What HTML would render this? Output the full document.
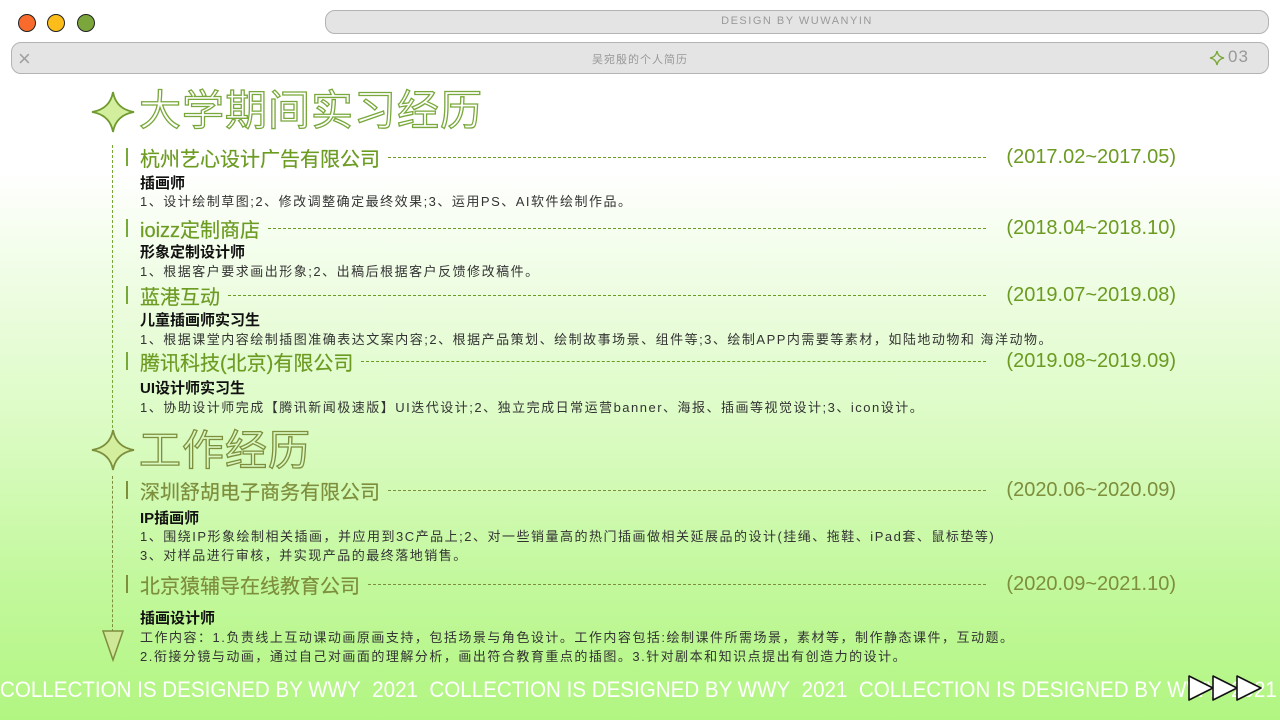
<!DOCTYPE html>
<html><head><meta charset="utf-8"><style>
*{margin:0;padding:0;box-sizing:border-box}
body{width:1280px;height:720px;overflow:hidden;position:relative;font-family:"Liberation Sans","Noto Sans CJK SC",sans-serif;
background:linear-gradient(to bottom,#fff 0px,#fff 170px,#effde4 280px,#d9fbc0 440px,#c3f89d 580px,#b2f682 720px)}
.a{position:absolute;white-space:nowrap}
.dot{position:absolute;top:14px;width:18px;height:18px;border-radius:50%;border:1.5px solid #222}
.bar{position:absolute;background:#e4e4e4;border:1.5px solid #b3b3b3;border-radius:10px}
.ttl{font-size:42px;color:#fff;-webkit-text-stroke:1.3px #79a83a;letter-spacing:1px;line-height:1}
.row{position:absolute;left:126px;display:flex;align-items:center;height:24px}
.row .v{width:2px;height:18px;background:#79a83a;margin-right:12px}
.row .c{font-size:20px;color:#6c9b22;white-space:nowrap;-webkit-text-stroke:0.2px #6c9b22}
.row .d{flex:1;border-top:1.3px dashed #6c9b22;margin:0 20px 0 8px}
.row .t{font-size:20px;color:#6c9b22;white-space:nowrap}
.role{position:absolute;left:140px;font-size:15px;font-weight:bold;color:#111;white-space:nowrap}
.desc{position:absolute;left:140px;font-size:13px;color:#333;letter-spacing:1.5px;white-space:nowrap}
.o .c,.o .t{color:#7d8e3c}.o .c{-webkit-text-stroke-color:#7d8e3c}.o .d{border-color:#7d8e3c}.o .v{background:#7d8e3c}
</style></head><body>
<div class="dot" style="left:18px;background:#f86b2c"></div>
<div class="dot" style="left:47px;background:#fcbc1a"></div>
<div class="dot" style="left:77px;background:#7aa63c"></div>
<div class="bar" style="left:325px;top:10px;width:944px;height:24px"></div>
<div class="a" style="left:325px;top:15px;width:944px;text-align:center;font-size:11px;color:#9a9a9a;letter-spacing:1.5px">DESIGN BY WUWANYIN</div>
<div class="bar" style="left:11px;top:42px;width:1258px;height:32px"></div>
<div class="a" style="left:18px;top:46px;font-size:22px;color:#a0a0a0">×</div>
<div class="a" style="left:0;top:51px;width:1280px;text-align:center;font-size:11px;color:#999;letter-spacing:1px">吴宛殷的个人简历</div>
<svg class="a" style="left:1209px;top:50px" width="16" height="16" viewBox="0 0 16 16"><path d="M8 1 Q9 7 15 8 Q9 9 8 15 Q7 9 1 8 Q7 7 8 1Z" fill="none" stroke="#79a83a" stroke-width="1.3"/></svg>
<div class="a" style="left:1228px;top:47px;font-size:17px;color:#999;letter-spacing:1px">03</div>

<svg class="a" style="left:90px;top:90px" width="46" height="44" viewBox="0 0 46 44"><path d="M23 2 Q26 19 44 22 Q26 25 23 42 Q20 25 2 22 Q20 19 23 2Z" fill="#d3ee9d" stroke="#6f9a2e" stroke-width="1.8"/></svg>
<div class="a ttl" style="left:139px;top:90px">大学期间实习经历</div>
<svg class="a" style="left:90px;top:428px" width="46" height="44" viewBox="0 0 46 44"><path d="M23 2 Q26 19 44 22 Q26 25 23 42 Q20 25 2 22 Q20 19 23 2Z" fill="#d3ee9d" stroke="#7d8e3c" stroke-width="1.8"/></svg>
<div class="a ttl" style="left:139px;top:430px;color:#d8f8c0;-webkit-text-stroke-color:#7d8e3c">工作经历</div>

<div class="a" style="left:112px;top:145px;height:283px;border-left:1.5px dashed #79a83a"></div>
<div class="a" style="left:112px;top:476px;height:156px;border-left:1.5px dashed #7d8e3c"></div>
<svg class="a" style="left:102px;top:630px" width="22" height="32" viewBox="0 0 22 32"><path d="M1 1 L21 1 L11 30Z" fill="#cfe898" stroke="#7d8e3c" stroke-width="1.5"/></svg>

<div class="row" style="top:145px;width:1050px"><span class="v"></span><span class="c">杭州艺心设计广告有限公司</span><span class="d"></span><span class="t">(2017.02~2017.05)</span></div>
<div class="role" style="top:172px">插画师</div>
<div class="desc" style="top:191px">1、设计绘制草图;2、修改调整确定最终效果;3、运用PS、AI软件绘制作品。</div>
<div class="row" style="top:216px;width:1050px"><span class="v"></span><span class="c">ioizz定制商店</span><span class="d"></span><span class="t">(2018.04~2018.10)</span></div>
<div class="role" style="top:241px">形象定制设计师</div>
<div class="desc" style="top:261px">1、根据客户要求画出形象;2、出稿后根据客户反馈修改稿件。</div>
<div class="row" style="top:283px;width:1050px"><span class="v"></span><span class="c">蓝港互动</span><span class="d"></span><span class="t">(2019.07~2019.08)</span></div>
<div class="role" style="top:309px">儿童插画师实习生</div>
<div class="desc" style="top:329px">1、根据课堂内容绘制插图准确表达文案内容;2、根据产品策划、绘制故事场景、组件等;3、绘制APP内需要等素材，如陆地动物和 海洋动物。</div>
<div class="row" style="top:349px;width:1050px"><span class="v"></span><span class="c">腾讯科技(北京)有限公司</span><span class="d"></span><span class="t">(2019.08~2019.09)</span></div>
<div class="role" style="top:377px">UI设计师实习生</div>
<div class="desc" style="top:397px">1、协助设计师完成【腾讯新闻极速版】UI迭代设计;2、独立完成日常运营banner、海报、插画等视觉设计;3、icon设计。</div>

<div class="row o" style="top:478px;width:1050px"><span class="v"></span><span class="c">深圳舒胡电子商务有限公司</span><span class="d"></span><span class="t">(2020.06~2020.09)</span></div>
<div class="role" style="top:507px">IP插画师</div>
<div class="desc" style="top:526px">1、围绕IP形象绘制相关插画，并应用到3C产品上;2、对一些销量高的热门插画做相关延展品的设计(挂绳、拖鞋、iPad套、鼠标垫等)</div>
<div class="desc" style="top:545px">3、对样品进行审核，并实现产品的最终落地销售。</div>
<div class="row o" style="top:572px;width:1050px"><span class="v"></span><span class="c">北京猿辅导在线教育公司</span><span class="d"></span><span class="t">(2020.09~2021.10)</span></div>
<div class="role" style="top:607px">插画设计师</div>
<div class="desc" style="top:627px">工作内容：1.负责线上互动课动画原画支持，包括场景与角色设计。工作内容包括:绘制课件所需场景，素材等，制作静态课件，互动题。</div>
<div class="desc" style="top:646px">2.衔接分镜与动画，通过自己对画面的理解分析，画出符合教育重点的插图。3.针对剧本和知识点提出有创造力的设计。</div>

<div class="a" style="left:0;top:677px;font-size:22px;color:#fff;transform:scaleX(0.935);transform-origin:0 0">COLLECTION IS DESIGNED BY WWY&nbsp;&nbsp;2021&nbsp;&nbsp;COLLECTION IS DESIGNED BY WWY&nbsp;&nbsp;2021&nbsp;&nbsp;COLLECTION IS DESIGNED BY WWY&nbsp;&nbsp;2021</div>
<svg class="a" style="left:1186px;top:673px" width="80" height="30" viewBox="0 0 80 30">
<g fill="#fff" stroke="#111" stroke-width="1.6" stroke-linejoin="round"><path d="M3 3 L27 15 L3 27Z"/><path d="M27 3 L51 15 L27 27Z"/><path d="M51 3 L75 15 L51 27Z"/></g></svg>
</body></html>
